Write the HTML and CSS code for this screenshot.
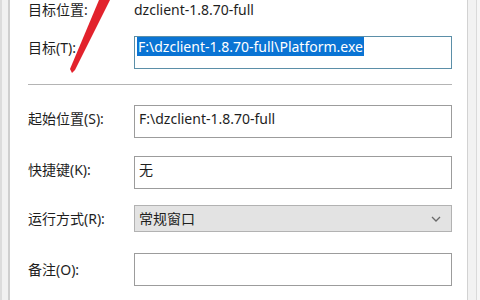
FILE: index.html
```html
<!DOCTYPE html>
<html lang="zh-CN">
<head>
<meta charset="utf-8">
<title>属性</title>
<link rel="stylesheet" href="styles.css">
</head>
<body>
<div class="frame">
  <div class="edge-left"></div>
  <main class="page">
    <div class="row row-info">
      <span class="label">目标位置:</span>
      <span class="value">dzclient-1.8.70-full</span>
    </div>
    <div class="row row-target">
      <span class="label">目标(T):</span>
      <div class="field field-focus"><span class="sel">F:\dzclient-1.8.70-full\Platform.exe</span></div>
    </div>
    <div class="sep"></div>
    <div class="row row-start">
      <span class="label">起始位置(S):</span>
      <div class="field">F:\dzclient-1.8.70-full</div>
    </div>
    <div class="row row-key">
      <span class="label">快捷键(K):</span>
      <div class="field">无</div>
    </div>
    <div class="row row-run">
      <span class="label">运行方式(R):</span>
      <div class="combo"><span>常规窗口</span>
        <svg class="chev" width="10" height="6" viewBox="0 0 10 6"><polyline points="1,1 5,5 9,1" fill="none" stroke="#6a6a6a" stroke-width="1.3"/></svg>
      </div>
    </div>
    <div class="row row-note">
      <span class="label">备注(O):</span>
      <div class="field"></div>
    </div>
  </main>
  <div class="edge-right"></div>
  <svg class="arrow" width="480" height="300" viewBox="0 0 480 300">
    <polygon points="99,0 110,0 75,70 72,73 70,69" fill="#e2222c"/>
  </svg>
</div>
</body>
</html>
```
FILE: styles.css
```css
html, body {
  margin: 0;
  padding: 0;
  background: #ffffff;
}
.frame {
  position: relative;
  display: flex;
  width: 480px;
  height: 300px;
  overflow: hidden;
  font-family: "Noto Sans", "Noto Sans CJK SC", sans-serif;
  font-size: 14px;
  color: #1e1e1e;
}
.edge-left {
  width: 10px;
  flex: none;
  background: linear-gradient(to right, #dcdcdc 0, #dcdcdc 2px, #f1f1f1 2px, #f1f1f1 8px, #cfcfcf 8px, #cfcfcf 10px);
}
.edge-right {
  width: 13px;
  flex: none;
  background: linear-gradient(to right, #d2d2d2 0, #d2d2d2 1px, #f2f2f2 1px, #f2f2f2 9px, #dadada 9px, #dadada 10px, #f6f6f6 10px);
}
.page {
  flex: 1;
  padding: 0 15px 0 18px;
  display: flex;
  flex-direction: column;
}
.row {
  display: grid;
  grid-template-columns: 106px 1fr;
  align-items: start;
}
.label, .value {
  line-height: 18px;
  white-space: nowrap;
}
.row-info {
  padding-top: 1px;
}
.row-target {
  margin-top: 17px;
}
.row-target .label { padding-top: 3px; }
.sep {
  height: 1px;
  background: #b4b4b4;
  margin-top: 15px;
}
.row-start { margin-top: 20px; }
.row-start .label { padding-top: 5px; }
.row-key { margin-top: 18px; }
.row-key .label { padding-top: 5px; }
.row-run { margin-top: 16px; align-items: center; }
.row-note { margin-top: 21px; }
.row-note .label { padding-top: 8px; }

.field {
  box-sizing: border-box;
  height: 33px;
  border: 1px solid #9c9c9c;
  background: #fff;
  padding: 4px 0 0 4px;
  line-height: 18px;
  white-space: nowrap;
}
.field-focus {
  border-color: #5b8fa8;
  padding: 1px 0 0 2px;
}
.sel {
  background: #0a74d4;
  color: #ffffff;
  padding: 0 1px;
}
.combo {
  box-sizing: border-box;
  height: 27px;
  border: 1px solid #b2b2b2;
  background: #e3e3e3;
  display: flex;
  align-items: center;
  justify-content: space-between;
  padding: 0 10px 0 4px;
  line-height: 18px;
}
.chev { display: block; }
.arrow {
  position: absolute;
  left: 0;
  top: 0;
  pointer-events: none;
}
```
